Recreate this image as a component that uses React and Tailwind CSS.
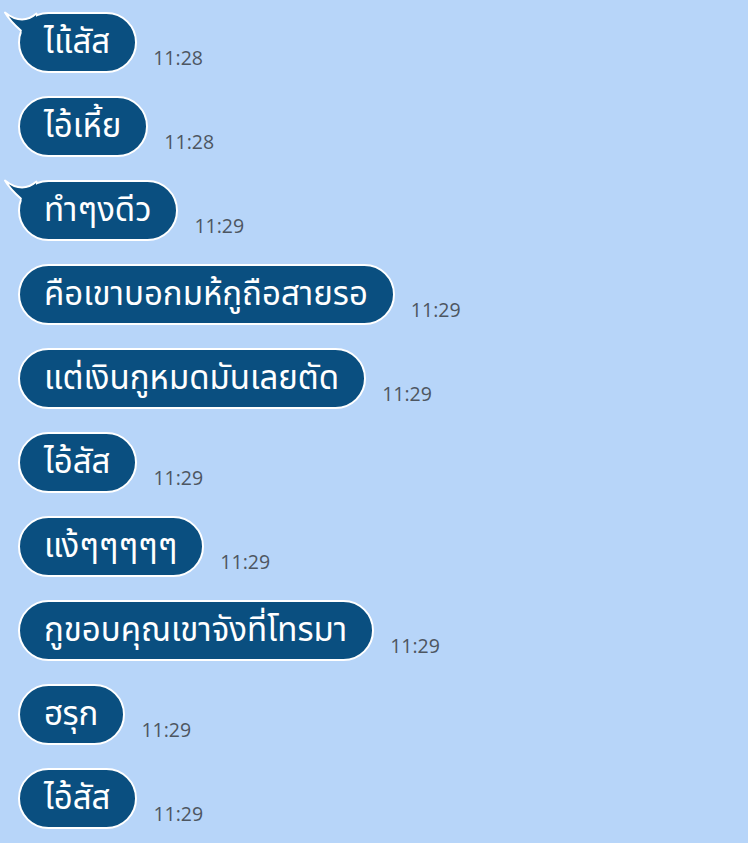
import React from "react";

const msgs = [
  { t: "ไแ้สัส", time: "11:28", tail: true },
  { t: "ไอ้เหี้ย", time: "11:28" },
  { t: "ทำๆงดีว", time: "11:29", tail: true },
  { t: "คือเขาบอกมห้กูถือสายรอ", time: "11:29" },
  { t: "แต่เงินกูหมดมันเลยตัด", time: "11:29" },
  { t: "ไอ้สัส", time: "11:29" },
  { t: "แง้ๆๆๆๆๆ", time: "11:29" },
  { t: "กูขอบคุณเขาจังที่โทรมา", time: "11:29" },
  { t: "ฮรุก", time: "11:29" },
  { t: "ไอ้สัส", time: "11:29" },
];

function Tail() {
  return (
    <svg
      className="absolute left-[-16px] top-[-2px]"
      width="40"
      height="34"
      viewBox="0 0 40 34"
    >
      <path d="M3,2.5 Q20,16 34,4.2 L34,30 L22,30 L19,20 Q8,11 3,2.5 Z" fill="#0a4f80" />
      <path
        d="M34.5,3.6 Q20,16 3,2.5 Q8,11 18.8,20.5"
        fill="none"
        stroke="#ffffff"
        strokeWidth="2"
        strokeLinejoin="round"
        strokeLinecap="round"
      />
    </svg>
  );
}

export default function App() {
  return (
    <div className="w-[748px] h-[843px] bg-[#b7d5f9] overflow-hidden pl-[18px] pt-[12px] flex flex-col gap-[23px]">
      {msgs.map((m, i) => (
        <div key={i} className="flex items-end gap-[16px]">
          <div className="relative">
            <div className="h-[61px] rounded-full border-2 border-white bg-[#0a4f80] pl-[24px] pr-[25px] pt-[2px] flex items-center text-white text-[33px] whitespace-nowrap">
              <span className="font-['Noto_Sans_Thai','Noto_Sans','DejaVu_Sans',sans-serif] leading-none">
                {m.t}
              </span>
            </div>
            {m.tail && <Tail />}
          </div>
          <div className="mb-[4px] text-[19.5px] leading-[22px] text-[#4d5661] font-['Open_Sans',sans-serif]">
            {m.time}
          </div>
        </div>
      ))}
    </div>
  );
}
